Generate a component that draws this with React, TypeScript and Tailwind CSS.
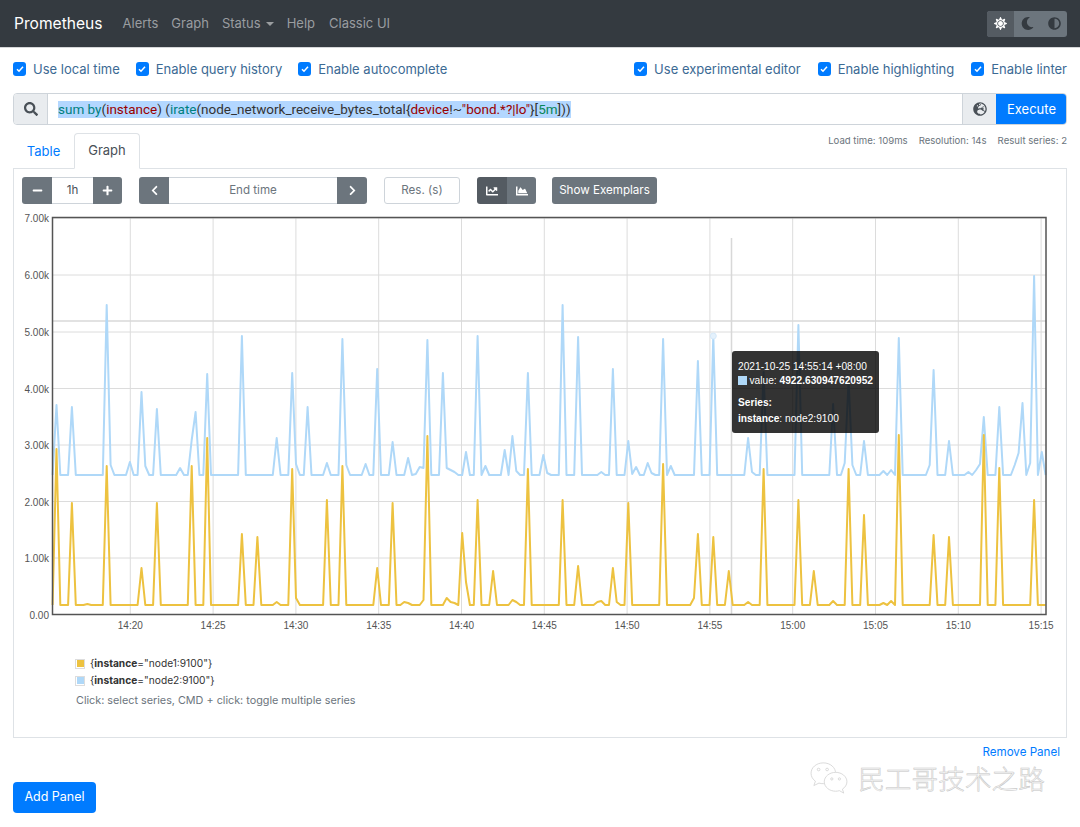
import {
  FaAdjust,
  FaChartArea,
  FaChartLine,
  FaChevronLeft,
  FaChevronRight,
  FaGlobeEurope,
  FaMinus,
  FaMoon,
  FaPlus,
  FaSearch,
  FaSun,
} from 'react-icons/fa'

const STEP = 3.864
const X0 = 52.6
const COUNT = 258

// [x, y] in page pixels, everything else sits on the baseline
const yellowPoints = [
  [56.5, 449], [72, 503], [88, 604], [107, 466], [141.7, 568], [157, 503], [192, 466], [207, 438],
  [242, 534], [257.6, 537], [277, 602], [292.3, 469], [296.5, 598], [327.3, 500], [342.6, 466],
  [377.3, 568], [392.7, 503], [405, 602], [409, 603], [424, 600], [427.7, 436], [446.7, 598], [450.7, 602], [455, 603],
  [462, 533], [466.3, 582], [477.7, 500], [493, 571], [512.7, 600], [516.7, 602], [528, 469],
  [562.7, 500], [578, 566], [597, 602], [600.7, 601], [612.7, 568], [616.7, 602], [628, 503],
  [662.7, 464], [693.3, 598], [697.7, 534], [713, 537], [728.7, 571], [748, 602], [763.3, 469],
  [798, 500], [813.7, 571], [833, 601], [848.3, 469], [863.7, 515], [883, 603], [891, 601], [898.3, 435],
  [933.3, 535], [948.7, 537], [983.3, 435], [998.7, 468], [1033.7, 500],
]

const bluePoints = [
  [56.7, 405], [72, 407], [107, 305], [111, 465], [130, 462], [141.7, 392], [145, 466], [157, 409], [180.7, 468],
  [191.7, 440], [195.7, 412], [207.3, 374], [242, 336], [276.7, 438], [292.3, 373], [296.7, 464], [307.7, 407],
  [327, 463], [342.3, 339], [346, 465], [365.7, 464], [377.3, 369], [392.7, 442], [408.3, 458], [416, 474], [420, 467],
  [423.3, 468], [427.7, 340], [443, 373], [446.7, 468], [450.7, 470], [455, 472], [466.3, 452], [477.7, 336],
  [485.3, 466], [504.7, 450], [512.7, 436], [516.7, 471], [528, 373], [543.3, 455], [547.3, 473], [562.7, 305],
  [578, 337], [600.7, 472], [612.7, 369], [628, 441], [632, 474], [636, 467], [647.3, 463], [651.7, 473], [662.7, 339],
  [670.7, 466], [697.7, 361], [713.3, 336], [748, 438], [752.3, 472], [763.3, 372], [798, 325], [833, 404],
  [844.3, 463], [848.3, 380], [852, 465], [863.7, 441], [883, 471], [891, 470], [898.3, 338], [929.3, 465],
  [933.3, 370], [948.7, 441], [968, 472], [974.7, 470], [978.7, 464], [983.3, 417], [998.7, 407], [1014.3, 465],
  [1018.3, 453], [1022, 403], [1030, 463], [1033.7, 276], [1041.3, 452],
]

function buildLine(points: number[][], baseline: number) {
  const ys = Array.from({ length: COUNT }, () => baseline)
  points.forEach(([x, y]) => {
    ys[Math.round((x - X0) / STEP)] = y
  })
  return ys.map((y, i) => `${(X0 + i * STEP).toFixed(1)},${y}`).join(' ')
}

const yTicks = [
  ['7.00k', 218],
  ['6.00k', 275],
  ['5.00k', 332],
  ['4.00k', 388.5],
  ['3.00k', 445],
  ['2.00k', 501.5],
  ['1.00k', 558],
  ['0.00', 614.5],
] as const

const xTicks = [
  '14:20', '14:25', '14:30', '14:35', '14:40', '14:45', '14:50', '14:55', '15:00', '15:05', '15:10', '15:15',
]

const Check = ({ label }: { label: string }) => (
  <label className="flex items-center gap-[7px] text-[#3c6a94]">
    <span className="flex h-[14px] w-[13px] items-center justify-center rounded-[3px] bg-[#007bff]">
      <svg viewBox="0 0 8 8" className="h-[8px] w-[8px]">
        <path d="M1 4.2 3 6.2 7 1.8" fill="none" stroke="#fff" strokeWidth="1.5" />
      </svg>
    </span>
    <span className="pt-px">{label}</span>
  </label>
)

const GrayButton = ({ children, className = '' }: { children: React.ReactNode; className?: string }) => (
  <button className={`flex h-[27px] items-center justify-center text-white ${className}`}>{children}</button>
)

const Chart = () => (
  <div className="relative mt-[4px] h-[430px]">
    <svg viewBox="14 208 1052 430" className="h-[430px] w-[1052px] font-['Liberation_Sans',sans-serif]">
      {yTicks.map(([label, y]) => (
        <g key={label}>
          <line x1="52" x2="1046" y1={y} y2={y} stroke="#dcdcdc" />
          <text x="49" y={y + 4} textAnchor="end" fontSize="10" fill="#545454">
            {label}
          </text>
        </g>
      ))}
      {xTicks.map((label, i) => {
        const x = 130.3 + i * 82.8
        return (
          <g key={label}>
            <line x1={x} x2={x} y1="218" y2="614" stroke="#dcdcdc" />
            <text x={x} y="629" textAnchor="middle" fontSize="10" fill="#545454">
              {label}
            </text>
          </g>
        )
      })}
      {/* crosshair */}
      <line x1="52" x2="1046" y1="321" y2="321" stroke="#d8d8d8" strokeWidth="1.5" />
      <line x1="731.5" x2="731.5" y1="238" y2="614" stroke="#d8d8d8" strokeWidth="1.5" />
      <polyline points={buildLine(bluePoints, 475)} fill="none" stroke="#afd8f8" strokeWidth="2" strokeLinejoin="round" />
      <polyline points={buildLine(yellowPoints, 605)} fill="none" stroke="#edc240" strokeWidth="2" strokeLinejoin="round" />
      <circle cx="713.3" cy="336" r="3" fill="#e4f1fc" stroke="#d6e9f9" />
      <rect x="52.5" y="217.5" width="993.5" height="397" fill="none" stroke="#545454" strokeWidth="1.5" />
    </svg>

    <div className="absolute left-[718px] top-[143px] h-[82px] w-[147px] rounded-[3px] bg-black/80 px-[6px] pt-[8px] font-['Liberation_Sans',sans-serif] text-[10.2px] leading-[15px] text-white">
      <div>2021-10-25 14:55:14 +08:00</div>
      <div className="-mt-px flex items-center">
        <span className="mr-[3px] h-[9px] w-[9px] bg-[#afd8f8]" />
        value:&nbsp;<b>4922.630947620952</b>
      </div>
      <div className="mt-[7px] font-bold">Series:</div>
      <div className="mt-px">
        <b>instance</b>: node2:9100
      </div>
    </div>
  </div>
)

const LegendRow = ({ color, node }: { color: string; node: string }) => (
  <div className="flex h-[17px] items-center">
    <span className="flex h-[10px] w-[10px] items-center justify-center border border-[#ddd]">
      <span className="h-[7px] w-[7px]" style={{ background: color }} />
    </span>
    <span className="ml-[5px] text-[10.2px] text-[#333]">
      {'{'}
      <b>instance</b>="{node}"{'}'}
    </span>
  </div>
)

const Watermark = () => (
  <div className="mt-[2px] flex items-center">
    <svg viewBox="0 0 42 36" className="h-[34px] w-[42px]" fill="#fff" stroke="#cfcfcf" strokeWidth="0.8">
      <path d="M15 2C7.5 2 2 7 2 13c0 3.5 1.8 6.4 4.6 8.4L5 26l5.4-2.6c1.6.4 3 .6 4.6.6 7.5 0 13-5 13-11S22.5 2 15 2Z" />
      <path d="M28 12c-6.5 0-12 4.4-12 10s5.5 10 12 10c1.4 0 2.7-.2 4-.6l4.6 2.6-1.4-4.2c2.8-1.8 4.800-4.600 4.800-7.800 0-5.600-5.500-10-12-10Z" />
      <circle cx="10" cy="9" r="1.4" />
      <circle cx="19" cy="9" r="1.4" />
      <circle cx="24" cy="19" r="1.2" />
      <circle cx="32" cy="19" r="1.2" />
    </svg>
    <span className="ml-[8px] font-['Noto_Sans_CJK_SC',sans-serif] text-[26.7px] font-light leading-none text-[#f8f8f8] [-webkit-text-stroke:0.5px_#c4c4c4]">
      民工哥技术之路
    </span>
  </div>
)

export default function App() {
  return (
    <div className="h-[827px] overflow-hidden bg-white font-['Inter',sans-serif] text-[13px] text-[#212529]">
      {/* Navbar */}
      <nav className="flex h-[48px] items-center border-b border-[#d5d6d8] bg-[#343a40] pl-[14px] pr-[13px]">
        <span className="mr-[20px] text-[15.6px] text-white">Prometheus</span>
        <div className="flex items-center gap-[13px] text-[#9a9da0]">
          <a>Alerts</a>
          <a>Graph</a>
          <a className="flex items-center gap-[5px]">
            Status
            <span className="h-0 w-0 border-x-[4px] border-t-[4px] border-x-transparent border-t-[#9a9da0]" />
          </a>
          <a>Help</a>
          <a className="ml-px">Classic UI</a>
        </div>
        <div className="ml-auto flex h-[26px] w-[80px] overflow-hidden rounded-[3px] bg-[#6c757d] text-[13px]">
          <span className="flex w-[27px] items-center justify-center bg-[#545b62] text-white">
            <FaSun />
          </span>
          <span className="flex w-[27px] items-center justify-center text-[#343a40]">
            <FaMoon />
          </span>
          <span className="flex w-[26px] items-center justify-center text-[#343a40]">
            <FaAdjust />
          </span>
        </div>
      </nav>

      <main className="px-[13px]">
        {/* Options */}
        <div className="mt-[10px] flex h-[22px] items-center">
          <div className="flex gap-[16px]">
            <Check label="Use local time" />
            <Check label="Enable query history" />
            <Check label="Enable autocomplete" />
          </div>
          <div className="ml-auto flex gap-[17px]">
            <Check label="Use experimental editor" />
            <Check label="Enable highlighting" />
            <Check label="Enable linter" />
          </div>
        </div>

        {/* Query */}
        <div className="mt-[13px] flex h-[32px] overflow-hidden rounded-[4px] border border-[#ced4da]">
          <span className="flex w-[34px] items-center justify-center border-r border-[#ced4da] bg-[#e9ecef] text-[14px] text-[#495057]">
            <FaSearch />
          </span>
          <div className="flex flex-1 items-center pl-[10px] font-['Roboto',sans-serif] text-[13.5px]">
            <span className="bg-[#b3d7ff] leading-[17px] text-[#333]">
              <span className="text-[#008080]">sum by</span>(<span className="text-[#990000]">instance</span>) (
              <span className="text-[#008080]">irate</span>(node_network_receive_bytes_total{'{'}
              <span className="text-[#990000]">device</span>!~<span className="text-[#990000]">"bond.*?|lo"</span>
              {'}'}[<span className="text-[#098658]">5m</span>]))
            </span>
          </div>
          <span className="flex w-[34px] items-center justify-center border-l border-[#ced4da] bg-[#e9ecef] text-[14px] text-[#495057]">
            <FaGlobeEurope />
          </span>
          <button className="-my-px -mr-px w-[71px] bg-[#007bff] pt-px text-[13px] text-white">Execute</button>
        </div>

        {/* Tabs */}
        <div className="mt-[8px] flex justify-between">
          <div className="flex">
            <a className="flex h-[35px] w-[61px] items-center justify-center pt-[2px] text-[#007bff]">Table</a>
            <a className="relative z-10 -mb-px flex h-[36px] w-[66px] items-center justify-center rounded-t-[4px] border border-[#dee2e6] border-b-white bg-white text-[#495057]">
              Graph
            </a>
          </div>
          <div className="mt-px flex h-[14px] gap-[11px] text-[9.6px] leading-[14px] text-[#6c757d]">
            <span>Load time: 109ms</span>
            <span>Resolution: 14s</span>
            <span>Result series: 2</span>
          </div>
        </div>

        {/* Panel */}
        <div className="h-[570px] border border-[#dee2e6]">
          <div className="ml-[8px] mt-[8px] flex text-[11.6px]">
            <div className="flex overflow-hidden rounded-[3px]">
              <GrayButton className="w-[30px] bg-[#6c757d] text-[11px]">
                <FaMinus />
              </GrayButton>
              <span className="flex h-[27px] w-[41px] items-center justify-center border-y border-[#ced4da] pt-px text-[#495057]">
                1h
              </span>
              <GrayButton className="w-[29px] bg-[#6c757d] text-[11px]">
                <FaPlus />
              </GrayButton>
            </div>
            <div className="ml-[17px] flex overflow-hidden rounded-[3px]">
              <GrayButton className="w-[30px] bg-[#6c757d] text-[11px]">
                <FaChevronLeft />
              </GrayButton>
              <span className="flex h-[27px] w-[168px] items-center justify-center border-y border-[#ced4da] pt-px text-[#6c757d]">
                End time
              </span>
              <GrayButton className="w-[30px] bg-[#6c757d] text-[11px]">
                <FaChevronRight />
              </GrayButton>
            </div>
            <span className="ml-[17px] flex h-[27px] w-[76px] items-center justify-center rounded-[3px] border border-[#ced4da] pt-px text-[#6c757d]">
              Res. (s)
            </span>
            <div className="ml-[17px] flex overflow-hidden rounded-[3px]">
              <GrayButton className="w-[30px] bg-[#545b62] text-[12px]">
                <FaChartLine />
              </GrayButton>
              <GrayButton className="w-[29px] bg-[#6c757d] text-[12px]">
                <FaChartArea />
              </GrayButton>
            </div>
            <GrayButton className="ml-[16px] w-[105px] rounded-[3px] bg-[#6c757d] pt-px">Show Exemplars</GrayButton>
          </div>

          <Chart />

          <div className="ml-[61px] mt-[17px]">
            <LegendRow color="#edc240" node="node1:9100" />
            <LegendRow color="#afd8f8" node="node2:9100" />
            <p className="ml-px mt-[4px] text-[10.8px] text-[#6c757d]">Click: select series, CMD + click: toggle multiple series</p>
          </div>
        </div>

        {/* Remove panel + watermark */}
        <div className="flex flex-col items-end pr-[7px]">
          <a className="mt-[7px] text-[11.6px] leading-[14px] text-[#007bff]">Remove Panel</a>
        </div>
        <div className="flex items-start justify-between pr-[22px]">
          <button className="mt-[23px] h-[31px] w-[83px] rounded-[4px] bg-[#007bff] text-[12.5px] text-white">
            Add Panel
          </button>
          <Watermark />
        </div>
      </main>
    </div>
  )
}
